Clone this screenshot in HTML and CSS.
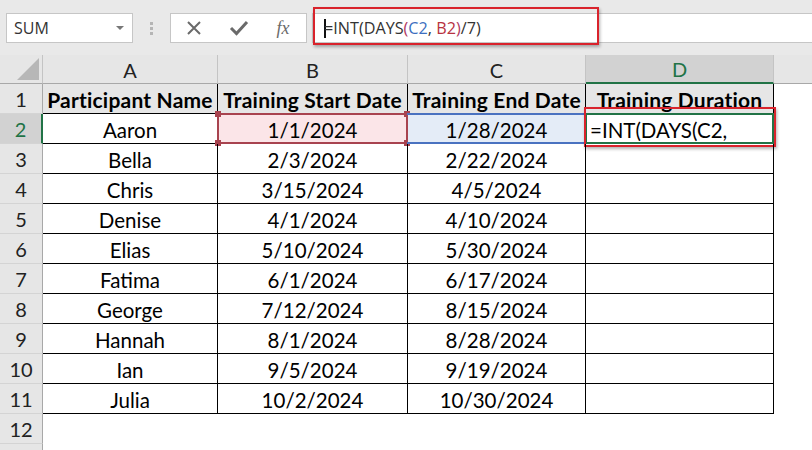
FILE: index.html
```html
<!DOCTYPE html>
<html>
<head>
<meta charset="utf-8">
<link rel="stylesheet" href="styles.css">
</head>
<body>
<div class="app">
  <div class="toolbar">
    <div class="namebox"><span class="nb-text">SUM</span><span class="nb-arrow"></span></div>
    <div class="dots"><i></i><i></i><i></i></div>
    <div class="fbtns">
      <svg class="ico" width="18" height="18" viewBox="0 0 18 18"><path d="M3 3 L15 15 M15 3 L3 15" stroke="#6a6a6a" stroke-width="2" fill="none"/></svg>
      <svg class="ico" width="20" height="18" viewBox="0 0 20 18"><path d="M2 9 L7.5 14.5 L18 3" stroke="#6a6a6a" stroke-width="3" fill="none"/></svg>
      <span class="fx">fx</span>
    </div>
    <div class="fbar">
      <span class="caret"></span><span class="ftext">=INT(DAYS<span class="pr">(</span><span class="rc">C2</span>, <span class="rb">B2</span><span class="pr">)</span>/7)</span>
      <div class="anno-f"></div>
    </div>
  </div>
  <div class="sheet">
    <div class="row hdr">
      <div class="corner"><span class="tri"></span></div>
      <div class="ch">A</div><div class="ch">B</div><div class="ch">C</div><div class="ch chsel">D</div><div class="ch chrest"></div>
    </div>
    <div class="row">
      <div class="rh">1</div>
      <div class="c bold">Participant Name</div><div class="c bold">Training Start Date</div><div class="c bold">Training End Date</div><div class="c bold">Training Duration</div><div class="e"></div>
    </div>
    <div class="row">
      <div class="rh rhsel">2</div>
      <div class="c">Aaron</div>
      <div class="c refb">1/1/2024<span class="fr frb"><i class="h tl"></i><i class="h tr"></i><i class="h bl"></i><i class="h br"></i></span></div>
      <div class="c refc">1/28/2024<span class="fr frc"></span></div>
      <div class="c edit">=INT(DAYS(C2,<span class="act"></span><span class="anno-d"></span></div>
      <div class="e"></div>
    </div>
    <div class="row"><div class="rh">3</div><div class="c">Bella</div><div class="c">2/3/2024</div><div class="c">2/22/2024</div><div class="c"></div><div class="e"></div></div>
    <div class="row"><div class="rh">4</div><div class="c">Chris</div><div class="c">3/15/2024</div><div class="c">4/5/2024</div><div class="c"></div><div class="e"></div></div>
    <div class="row"><div class="rh">5</div><div class="c">Denise</div><div class="c">4/1/2024</div><div class="c">4/10/2024</div><div class="c"></div><div class="e"></div></div>
    <div class="row"><div class="rh">6</div><div class="c">Elias</div><div class="c">5/10/2024</div><div class="c">5/30/2024</div><div class="c"></div><div class="e"></div></div>
    <div class="row"><div class="rh">7</div><div class="c">Fatima</div><div class="c">6/1/2024</div><div class="c">6/17/2024</div><div class="c"></div><div class="e"></div></div>
    <div class="row"><div class="rh">8</div><div class="c">George</div><div class="c">7/12/2024</div><div class="c">8/15/2024</div><div class="c"></div><div class="e"></div></div>
    <div class="row"><div class="rh">9</div><div class="c">Hannah</div><div class="c">8/1/2024</div><div class="c">8/28/2024</div><div class="c"></div><div class="e"></div></div>
    <div class="row"><div class="rh">10</div><div class="c">Ian</div><div class="c">9/5/2024</div><div class="c">9/19/2024</div><div class="c"></div><div class="e"></div></div>
    <div class="row"><div class="rh">11</div><div class="c">Julia</div><div class="c">10/2/2024</div><div class="c">10/30/2024</div><div class="c"></div><div class="e"></div></div>
    <div class="row"><div class="rh">12</div><div class="e"></div><div class="e"></div><div class="e"></div><div class="e"></div><div class="e"></div></div>
    <div class="row"><div class="rh"></div><div class="e"></div><div class="e"></div><div class="e"></div><div class="e"></div><div class="e"></div></div>
  </div>
</div>
</body>
</html>
```
FILE: styles.css
```css
* { box-sizing: border-box; }
html, body { margin: 0; padding: 0; }
body { width: 812px; height: 450px; overflow: hidden; background: #fff; font-family: Lato, "Liberation Sans", sans-serif; }
.app { width: 812px; height: 450px; overflow: hidden; }

.toolbar {
  height: 55px;
  background: #e9e9e9;
  display: flex;
  align-items: flex-start;
  padding-top: 13px;
}
.namebox {
  margin-left: 6px;
  width: 127px;
  height: 30px;
  background: #fff;
  border: 1px solid #c6c6c6;
  display: flex;
  align-items: center;
  justify-content: space-between;
  padding: 0 8px 0 7px;
}
.nb-text { font-family: "Open Sans", "Noto Sans", sans-serif; font-size: 16px; color: #333; }
.nb-arrow { width: 0; height: 0; border-left: 4px solid transparent; border-right: 4px solid transparent; border-top: 4px solid #777; }
.dots { width: 37px; height: 30px; display: flex; flex-direction: column; align-items: center; justify-content: center; gap: 2px; }
.dots i { display: block; width: 3px; height: 3px; background: #b5b5b5; }
.fbtns {
  width: 137px;
  height: 30px;
  background: #fff;
  border: 1px solid #c6c6c6;
  display: flex;
  align-items: center;
  justify-content: space-between;
  padding: 0 14px 0 14px;
}
.fx { font-family: "Liberation Serif", serif; font-style: italic; font-size: 18px; color: #6a6a6a; width: 18px; text-align: center; }
.fbar {
  position: relative;
  margin-left: 5px;
  flex: 1;
  height: 30px;
  background: #fff;
  border-top: 1px solid #c6c6c6;
  border-bottom: 1px solid #c6c6c6;
  border-left: 1px solid #c6c6c6;
  display: flex;
  align-items: center;
  padding-left: 11px;
}
.caret { width: 2px; height: 19px; background: #111; margin-right: -2px; }
.ftext { font-family: "Open Sans", "Noto Sans", sans-serif; font-size: 16.2px; color: #333; }
.pr { color: #b03a63; }
.rc { color: #3d6fc0; }
.rb { color: #b8323f; }
.anno-f {
  position: absolute;
  left: 0; top: -7px;
  width: 286px; height: 38px;
  border: 2px solid #d9232c;
  box-shadow: 1px 2px 3px rgba(0,0,0,0.3);
}

.row {
  display: grid;
  grid-template-columns: 43px 175px 190px 178px 188px 1fr;
  height: 30px;
}
.row.hdr { height: 29px; }
.corner { position: relative; background: #e6e6e6; border-right: 1px solid #c4c4c4; border-bottom: 1px solid #a8a8a8; }
.tri { position: absolute; right: 3px; bottom: 3px; width: 0; height: 0; border-left: 22px solid transparent; border-bottom: 22px solid #b7b7b7; }
.ch {
  background: #e6e6e6;
  border-right: 1px solid #c4c4c4;
  border-bottom: 1px solid #a8a8a8;
  display: flex; align-items: center; justify-content: center;
  font-size: 20px; color: #222;
  padding-top: 1px;
}
.ch.chsel { background: #d2d2d2; color: #217346; border-bottom: 2px solid #217346; }
.ch.chrest { border-right: none; }
.rh {
  background: #e6e6e6;
  border-right: 1px solid #a8a8a8;
  border-bottom: 1px solid #d4d4d4;
  display: flex; align-items: center; justify-content: center;
  font-size: 20px; color: #222;
  padding-top: 1px;
}
.rh.rhsel { background: #d2d2d2; color: #217346; border-right: 2px solid #217346; }
.c {
  position: relative;
  border-right: 1px solid #000;
  border-bottom: 1px solid #000;
  display: flex; align-items: center; justify-content: center;
  font-size: 20.5px; color: #000;
  padding-top: 2px;
  white-space: nowrap;
}
.c.bold { font-weight: 700; font-size: 21px; letter-spacing: 0.2px; background: #e6e6e6; }
.refb { background: #fbe5e8; }
.refc { background: #e4ecf7; }
.fr { position: absolute; left: -1px; top: -1px; right: -1px; bottom: -1px; border: 2px solid; }
.frb { border-color: #a8434f; }
.frc { border-color: #4a72c0; border-left: none; border-right: none; }
.h { position: absolute; width: 6px; height: 6px; background: #a8434f; }
.h.tl { left: -4px; top: -4px; }
.h.tr { right: -4px; top: -4px; }
.h.bl { left: -4px; bottom: -4px; }
.h.br { right: -4px; bottom: -4px; }
.edit { justify-content: flex-start; padding-left: 4px; }
.act { position: absolute; left: -1px; top: -1px; right: -1px; bottom: -1px; border: 2px solid #217346; }
.anno-d {
  position: absolute;
  left: -2px; top: -7px; right: -3px; bottom: -4px;
  border: 2px solid #d9232c;
  box-shadow: 1px 2px 3px rgba(0,0,0,0.3);
}
```
